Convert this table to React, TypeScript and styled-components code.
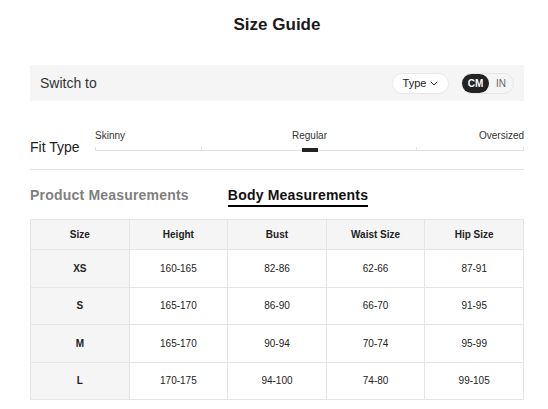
import React from "react";
import styled, { createGlobalStyle } from "styled-components";

const Global = createGlobalStyle`
  html, body { margin: 0; padding: 0; background: #fff; }
  body { font-family: "Liberation Sans", Arial, sans-serif; color: #222; }
`;

const Page = styled.div`
  padding: 15px 24px 0 30px;
  width: 494px;
`;

const Title = styled.h1`
  margin: 0;
  font-size: 17px;
  line-height: 20px;
  font-weight: 700;
  text-align: center;
  color: #1a1a1a;
`;

const SwitchBar = styled.div`
  margin-top: 30px;
  height: 36px;
  background: #f5f5f5;
  display: flex;
  align-items: center;
  padding: 0 10px;
`;

const SwitchLabel = styled.span`
  font-size: 14px;
  color: #333;
  flex: 1;
`;

const TypePill = styled.button`
  height: 21px;
  width: 57px;
  border: 1px solid #e8e8e8;
  border-radius: 11px;
  background: #fff;
  display: flex;
  align-items: center;
  justify-content: center;
  gap: 4px;
  font-family: inherit;
  font-size: 11px;
  color: #222;
  padding: 0;
  margin-right: 12px;
`;

const Toggle = styled.div`
  height: 19px;
  width: 51px;
  border: 1px solid #e6e6e6;
  border-radius: 11px;
  display: flex;
  align-items: center;
`;

const ToggleOpt = styled.span<{ $active?: boolean }>`
  height: 19px;
  width: ${(p) => (p.$active ? "27px" : "24px")};
  border-radius: 10px;
  display: flex;
  align-items: center;
  justify-content: center;
  font-size: 10px;
  font-weight: ${(p) => (p.$active ? 700 : 400)};
  background: ${(p) => (p.$active ? "#222" : "transparent")};
  color: ${(p) => (p.$active ? "#fff" : "#666")};
`;

const FitSection = styled.div`
  padding-top: 29px;
  padding-bottom: 14px;
  border-bottom: 1px solid #e5e5e5;
  display: flex;
  align-items: flex-end;
`;

const FitLabel = styled.div`
  width: 65px;
  font-size: 14px;
  line-height: 16px;
  color: #222;
`;

const Slider = styled.div`
  flex: 1;
  display: flex;
  flex-direction: column;
`;

const SliderLabels = styled.div`
  display: grid;
  grid-template-columns: 1fr 1fr 1fr;
  font-size: 10px;
  line-height: 12px;
  color: #333;
`;

const SliderLabel = styled.span<{ $align: "left" | "center" | "right" }>`
  text-align: ${(p) => p.$align};
`;

const Track = styled.div`
  position: relative;
  height: 13px;
`;

const TrackLine = styled.div`
  position: absolute;
  left: 0;
  right: 0;
  top: 8px;
  height: 1px;
  background: #e3e3e3;
`;

const Tick = styled.div`
  position: absolute;
  top: 5px;
  width: 1px;
  height: 3px;
  background: #e3e3e3;
`;

const Thumb = styled.div`
  position: absolute;
  top: 6px;
  left: 50%;
  margin-left: -8px;
  width: 16px;
  height: 4px;
  background: #222;
`;

const Tabs = styled.div`
  display: flex;
  gap: 39px;
  padding-top: 17px;
  margin-bottom: 12px;
`;

const Tab = styled.div<{ $active?: boolean }>`
  font-size: 14px;
  line-height: 16px;
  font-weight: 700;
  letter-spacing: 0.2px;
  color: ${(p) => (p.$active ? "#111" : "#808080")};
  padding-bottom: 2px;
  border-bottom: 2px solid ${(p) => (p.$active ? "#000" : "transparent")};
`;

const Table = styled.table`
  width: 494px;
  border-collapse: collapse;
  table-layout: fixed;
  font-size: 10px;
`;

const Th = styled.th`
  height: 29px;
  background: #f5f5f5;
  border: 1px solid #e5e5e5;
  font-weight: 700;
  color: #222;
  padding: 0;
`;

const Td = styled.td<{ $head?: boolean }>`
  height: 36.5px;
  border: 1px solid #e5e5e5;
  text-align: center;
  padding: 0;
  background: ${(p) => (p.$head ? "#f5f5f5" : "#fff")};
  font-weight: ${(p) => (p.$head ? 700 : 400)};
  color: #222;
`;

const Chevron = () => (
  <svg width="8" height="5" viewBox="0 0 8 5" fill="none">
    <path d="M0.8 0.8L4 4L7.2 0.8" stroke="#333" strokeWidth="1" />
  </svg>
);

const rows = [
  ["XS", "160-165", "82-86", "62-66", "87-91"],
  ["S", "165-170", "86-90", "66-70", "91-95"],
  ["M", "165-170", "90-94", "70-74", "95-99"],
  ["L", "170-175", "94-100", "74-80", "99-105"],
];

export default function App() {
  return (
    <>
      <Global />
      <Page>
        <Title>Size Guide</Title>
        <SwitchBar>
          <SwitchLabel>Switch to</SwitchLabel>
          <TypePill>
            Type <Chevron />
          </TypePill>
          <Toggle>
            <ToggleOpt $active>CM</ToggleOpt>
            <ToggleOpt>IN</ToggleOpt>
          </Toggle>
        </SwitchBar>
        <FitSection>
          <FitLabel>Fit Type</FitLabel>
          <Slider>
            <SliderLabels>
              <SliderLabel $align="left">Skinny</SliderLabel>
              <SliderLabel $align="center">Regular</SliderLabel>
              <SliderLabel $align="right">Oversized</SliderLabel>
            </SliderLabels>
            <Track>
              <TrackLine />
              <Tick style={{ left: 0 }} />
              <Tick style={{ left: "24.7%" }} />
              <Tick style={{ left: "74.8%" }} />
              <Tick style={{ right: 0 }} />
              <Thumb />
            </Track>
          </Slider>
        </FitSection>
        <Tabs>
          <Tab>Product Measurements</Tab>
          <Tab $active>Body Measurements</Tab>
        </Tabs>
        <Table>
          <thead>
            <tr>
              <Th>Size</Th>
              <Th>Height</Th>
              <Th>Bust</Th>
              <Th>Waist Size</Th>
              <Th>Hip Size</Th>
            </tr>
          </thead>
          <tbody>
            {rows.map((r) => (
              <tr key={r[0]}>
                {r.map((c, i) => (
                  <Td key={i} $head={i === 0}>
                    {c}
                  </Td>
                ))}
              </tr>
            ))}
          </tbody>
        </Table>
      </Page>
    </>
  );
}
